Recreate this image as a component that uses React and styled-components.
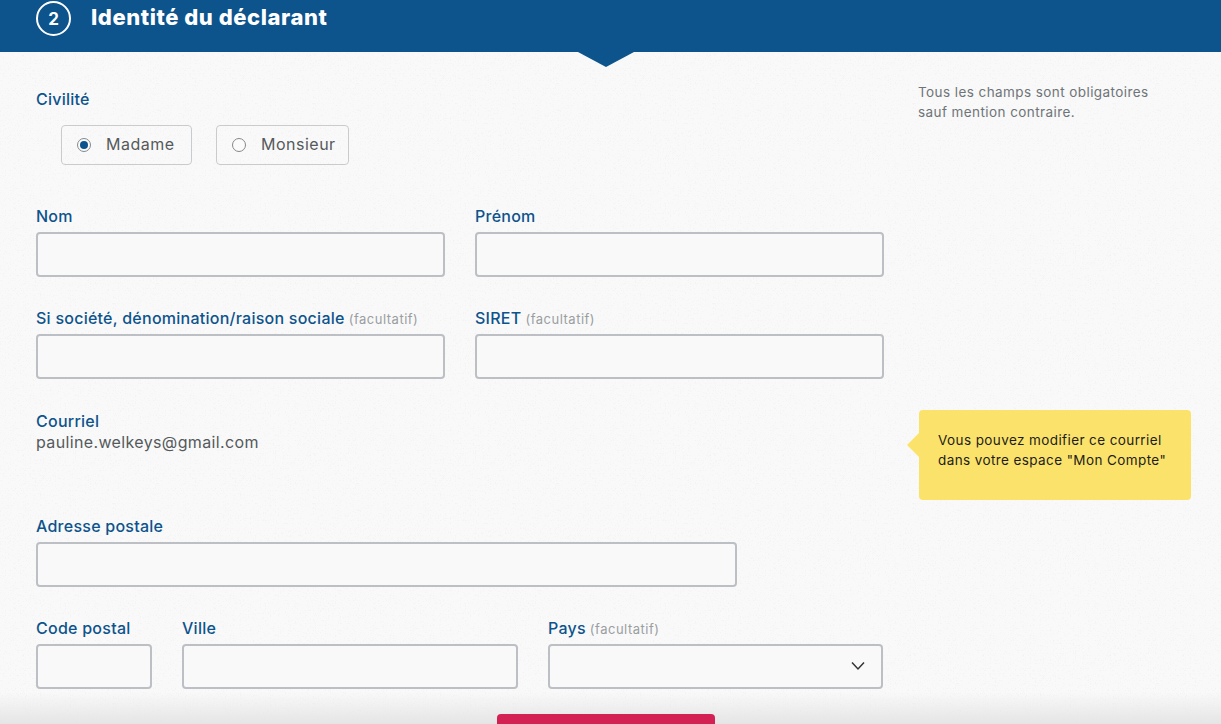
import React from "react";
import styled, { createGlobalStyle } from "styled-components";

const noise = `url("data:image/svg+xml,%3Csvg xmlns='http://www.w3.org/2000/svg' width='200' height='200'%3E%3Cfilter id='n' x='0' y='0' width='100%25' height='100%25'%3E%3CfeTurbulence type='turbulence' baseFrequency='1.6' numOctaves='1' seed='7'/%3E%3CfeColorMatrix values='0 0 0 0 .55 0 0 0 0 .55 0 0 0 0 .55 0 0 0 4 -1.1'/%3E%3C/filter%3E%3Crect width='200' height='200' filter='url(%23n)' opacity='.12'/%3E%3C/svg%3E")`;

const Global = createGlobalStyle`
  html, body { margin: 0; padding: 0; height: 724px; overflow: hidden; background: #f8f8f8; }
  * { box-sizing: border-box; }
  body { font-family: Inter, "Liberation Sans", sans-serif; }
`;

const Page = styled.div`
  position: relative;
  width: 1221px;
  height: 724px;
  overflow: hidden;
  background: linear-gradient(180deg, transparent 0, transparent 692px, #e5e5e5 724px), ${noise}, #f9f9f9;
`;

const Header = styled.header`
  position: relative;
  height: 52px;
  background: #0d538c;
  display: flex;
  align-items: flex-start;
  gap: 20px;
  padding: 1px 0 0 36px;
  &::after {
    content: "";
    position: absolute;
    left: 578px;
    top: 52px;
    border-style: solid;
    border-width: 15px 28px 0 28px;
    border-color: #0d538c transparent transparent transparent;
  }
`;

const StepCircle = styled.span`
  width: 35px;
  height: 35px;
  border: 2px solid #fff;
  border-radius: 50%;
  color: #fff;
  font-size: 17px;
  font-weight: 700;
  display: flex;
  align-items: center;
  justify-content: center;
`;

const Title = styled.h2`
  margin: 0;
  color: #fff;
  font-size: 22px;
  line-height: 32px;
  font-weight: 800;
  letter-spacing: 0.55px;
`;

const Content = styled.div`
  display: grid;
  grid-template-columns: 848px 272px;
  column-gap: 35px;
  padding: 0 0 0 36px;
`;

const Form = styled.form`
  display: flex;
  flex-direction: column;
  padding-top: 37px;
`;

const Side = styled.aside`
  display: flex;
  flex-direction: column;
  padding-top: 30px;
`;

const Note = styled.p`
  margin: 0 0 0 -1px;
  color: #6f7478;
  font-size: 13.5px;
  line-height: 20px;
  letter-spacing: 0.42px;
`;

const Callout = styled.div`
  position: relative;
  margin-top: 288px;
  height: 90px;
  padding: 20px 19px 0;
  background: #fbe36b;
  border-radius: 4px;
  color: #1d1d1b;
  font-size: 13.5px;
  line-height: 20px;
  letter-spacing: 0.4px;
  white-space: nowrap;
  &::before {
    content: "";
    position: absolute;
    left: -12px;
    top: 23px;
    border-style: solid;
    border-width: 12px 12px 12px 0;
    border-color: transparent #fbe36b transparent transparent;
  }
`;

const Label = styled.label`
  display: block;
  color: #0d538c;
  font-size: 16px;
  line-height: 20px;
  font-weight: 500;
  letter-spacing: 0.25px;
  white-space: nowrap;
`;

const Optional = styled.span`
  color: #9a9ea1;
  font-size: 13px;
  line-height: 0;
  font-weight: 400;
  letter-spacing: 0.5px;
  margin-left: 4px;
`;

const RadioGroup = styled.div`
  display: flex;
  gap: 24px;
  margin: 16px 0 41px 25px;
`;

const RadioCard = styled.label`
  display: flex;
  align-items: center;
  width: ${(p) => p.$w}px;
  height: 40px;
  padding: 0 0 2px 15px;
  gap: 15px;
  border: 1px solid #c9cccf;
  border-radius: 4px;
  color: #55595c;
  font-size: 16px;
  letter-spacing: 0.5px;
`;

const RadioDot = styled.span`
  width: 14px;
  height: 14px;
  margin-top: 2px;
  border-radius: 50%;
  border: 1px solid #85898d;
  background: #fbfbfb;
  display: flex;
  align-items: center;
  justify-content: center;
  &::after {
    content: "";
    width: 8px;
    height: 8px;
    border-radius: 50%;
    background: ${(p) => (p.$on ? "#0d538c" : "transparent")};
  }
`;

const Row = styled.div`
  display: grid;
  grid-template-columns: ${(p) => p.$cols};
  column-gap: 30px;
  margin-bottom: ${(p) => p.$mb}px;
`;

const Field = styled.div`
  display: flex;
  flex-direction: column;
  gap: 6px;
`;

const Input = styled.div`
  position: relative;
  height: 45px;
  border: 2px solid #bcc0c4;
  border-radius: 4px;
  background: #f9f9f9;
`;

const Chevron = styled.svg`
  position: absolute;
  right: 16px;
  top: 15px;
`;

const Email = styled.div`
  color: #55595c;
  font-size: 16px;
  line-height: 22px;
  letter-spacing: 0.36px;
`;

const Contact = styled.div`
  margin-bottom: 63px;
`;

const Submit = styled.button`
  position: absolute;
  left: 497px;
  top: 714px;
  width: 218px;
  height: 50px;
  border: 0;
  border-radius: 4px 4px 0 0;
  background: #d42154;
`;

export default function App() {
  return (
    <Page>
      <Global />
      <Header>
        <StepCircle>2</StepCircle>
        <Title>Identité du déclarant</Title>
      </Header>
      <Content>
        <Form>
          <Label>Civilité</Label>
          <RadioGroup>
            <RadioCard $w={131}>
              <RadioDot $on />
              Madame
            </RadioCard>
            <RadioCard $w={133}>
              <RadioDot />
              Monsieur
            </RadioCard>
          </RadioGroup>
          <Row $cols="409px 409px" $mb={31}>
            <Field><Label>Nom</Label><Input /></Field>
            <Field><Label>Prénom</Label><Input /></Field>
          </Row>
          <Row $cols="409px 409px" $mb={32}>
            <Field>
              <Label>Si société, dénomination/raison sociale<Optional>(facultatif)</Optional></Label>
              <Input />
            </Field>
            <Field>
              <Label>SIRET<Optional>(facultatif)</Optional></Label>
              <Input />
            </Field>
          </Row>
          <Contact>
            <Label>Courriel</Label>
            <Email>pauline.welkeys@gmail.com</Email>
          </Contact>
          <Row $cols="701px" $mb={31}>
            <Field><Label>Adresse postale</Label><Input /></Field>
          </Row>
          <Row $cols="116px 336px 335px" $mb={0}>
            <Field><Label>Code postal</Label><Input /></Field>
            <Field><Label>Ville</Label><Input /></Field>
            <Field>
              <Label>Pays<Optional>(facultatif)</Optional></Label>
              <Input>
                <Chevron width="14" height="10" viewBox="0 0 14 10" fill="none" stroke="#333" strokeWidth="1.5">
                  <path d="M1 1.5 L7 8 L13 1.5" />
                </Chevron>
              </Input>
            </Field>
          </Row>
        </Form>
        <Side>
          <Note>Tous les champs sont obligatoires<br />sauf mention contraire.</Note>
          <Callout>Vous pouvez modifier ce courriel<br />dans votre espace "Mon Compte"</Callout>
        </Side>
      </Content>
      <Submit />
    </Page>
  );
}
